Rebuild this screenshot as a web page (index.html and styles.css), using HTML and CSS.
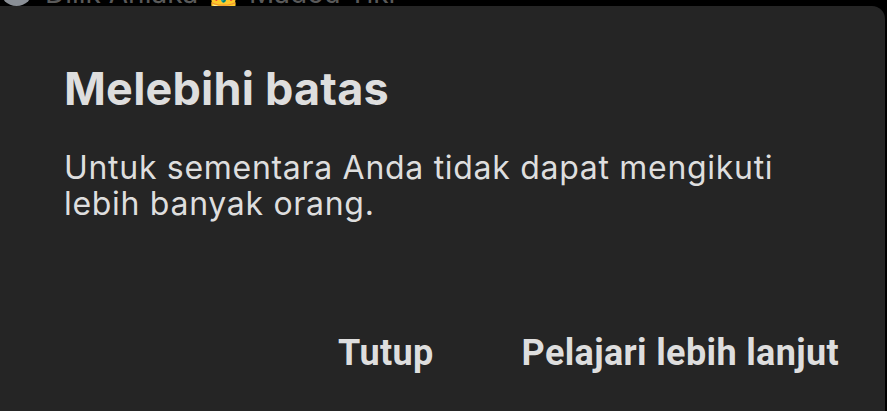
FILE: index.html
```html
<!DOCTYPE html>
<html lang="id">
<head>
<meta charset="utf-8">
<title>Melebihi batas</title>
<link rel="stylesheet" href="styles.css">
</head>
<body>
<div class="behind">
  <span class="avatar"></span>
  <span class="behind-text">Dilik Anlaka &#x1F451; Madou Tiki</span>
</div>
<div class="dialog">
  <h1 class="title">Melebihi batas</h1>
  <p class="message">Untuk sementara Anda tidak dapat mengikuti lebih banyak orang.</p>
  <div class="actions">
    <span class="action">Tutup</span>
    <span class="action">Pelajari lebih lanjut</span>
  </div>
</div>
</body>
</html>
```
FILE: styles.css
```css
html, body {
  margin: 0;
  padding: 0;
  background: #000;
  overflow: hidden;
  height: 411px;
}
body {
  font-family: "Inter", "Liberation Sans", sans-serif;
  color: #dedede;
}
.behind {
  height: 6px;
  overflow: hidden;
  display: flex;
  align-items: flex-start;
  gap: 12px;
}
.avatar {
  width: 33px;
  height: 33px;
  border-radius: 50%;
  background: #8a8f96;
  flex: none;
  margin-top: -27px;
}
.behind-text {
  font-size: 28px;
  line-height: 28px;
  margin-top: -21px;
  color: #5a5a5a;
}
.dialog {
  margin-left: -20px;
  width: 905px;
  height: 420px;
  background: #252525;
  border-radius: 13px;
  box-sizing: border-box;
  padding: 54px 46px 0 84px;
  display: flex;
  flex-direction: column;
}
.title {
  margin: 0;
  font-size: 45px;
  line-height: 58px;
  font-weight: 700;
  letter-spacing: 0.2px;
  color: #dedede;
}
.message {
  margin: 32px 0 0;
  font-size: 32px;
  line-height: 36px;
  font-weight: 400;
  letter-spacing: 0.7px;
  width: 760px;
}
.actions {
  display: flex;
  justify-content: flex-end;
  gap: 88px;
  margin-top: 111px;
}
.action {
  font-family: "Roboto", "Inter", sans-serif;
  font-size: 36px;
  line-height: 40px;
  font-weight: 700;
  letter-spacing: 0.35px;
}
```
